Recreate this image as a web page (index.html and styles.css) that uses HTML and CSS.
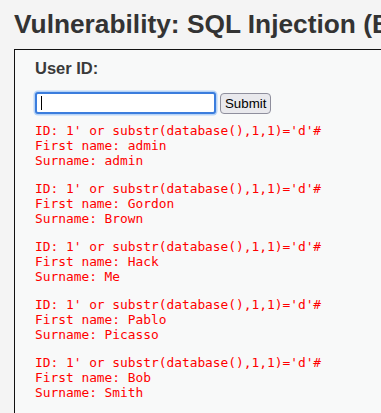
FILE: index.html
```html
<!DOCTYPE html>
<html>
<head>
<meta charset="utf-8">
<link rel="stylesheet" href="styles.css">
</head>
<body>
<div class="page">
  <h1 class="title">Vulnerability: SQL Injection (Blind)</h1>
  <div class="code-area">
    <form class="form">
      <p class="label">User ID:</p>
      <div class="row">
        <span class="field"><input class="input" type="text" name="id"><span class="caret"></span></span>
        <button class="btn" type="button">Submit</button>
      </div>
    </form>
    <pre class="out first">ID: 1' or substr(database(),1,1)='d'#
First name: admin
Surname: admin</pre>
    <pre class="out">ID: 1' or substr(database(),1,1)='d'#
First name: Gordon
Surname: Brown</pre>
    <pre class="out">ID: 1' or substr(database(),1,1)='d'#
First name: Hack
Surname: Me</pre>
    <pre class="out">ID: 1' or substr(database(),1,1)='d'#
First name: Pablo
Surname: Picasso</pre>
    <pre class="out">ID: 1' or substr(database(),1,1)='d'#
First name: Bob
Surname: Smith</pre>
  </div>
</div>
</body>
</html>
```
FILE: styles.css
```css
html, body {
  margin: 0;
  padding: 0;
  background: #f4f4f4;
  overflow: hidden;
}
.page {
  padding: 0 0 0 14px;
  width: 600px;
  font-family: "Liberation Sans", Arial, sans-serif;
}
.title {
  margin: 0;
  padding-top: 9px;
  font-size: 26.3px;
  line-height: 31px;
  font-weight: bold;
  color: #333333;
  white-space: nowrap;
}
.code-area {
  margin-top: 9px;
  border: 1px solid #111111;
  border-right: none;
  background: #f8f9f9;
  padding: 8px 20px 20px 20px;
}
.form {
  margin: 0;
}
.label {
  margin: 0;
  font-size: 16.5px;
  line-height: 20px;
  font-weight: bold;
  color: #3a3a3a;
}
.row {
  margin-top: 14px;
  display: flex;
  align-items: center;
  gap: 4px;
}
.field {
  position: relative;
  display: block;
}
.input {
  display: block;
  box-sizing: border-box;
  width: 181px;
  height: 22px;
  margin: 0;
  border: 2px solid #3b7ddd;
  border-radius: 3px;
  box-shadow: 0 0 0 1.5px #b7d4f7;
  background: #ffffff;
  outline: none;
  padding: 0 3px;
}
.caret {
  position: absolute;
  left: 6px;
  top: 4px;
  width: 1px;
  height: 14px;
  background: #000000;
}
.btn {
  box-sizing: border-box;
  height: 21px;
  padding: 0 4px;
  margin: 0;
  border: 1px solid #8f8f9d;
  border-radius: 4px;
  background: #e9e9ed;
  font-family: "Liberation Sans", Arial, sans-serif;
  font-size: 13.3px;
  color: #000000;
}
.out {
  margin: 13px 0;
  font-family: "DejaVu Sans Mono", monospace;
  font-size: 12.85px;
  line-height: 15px;
  color: #ff0000;
}
.out.first {
  margin-top: 9px;
}
```
